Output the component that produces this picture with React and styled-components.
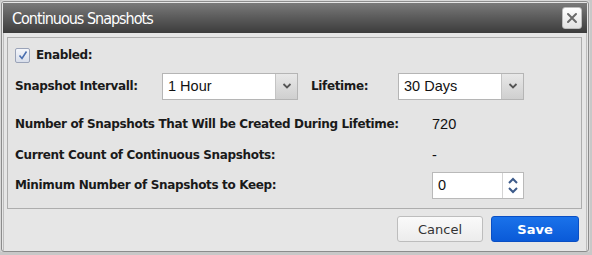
import styled, { createGlobalStyle } from "styled-components";

const Global = createGlobalStyle`
  html, body { margin: 0; padding: 0; background: #c8c8c8; }
  body { font-family: "DejaVu Sans", Verdana, sans-serif; }
`;

export default function App() {
  return (
    <>
      <Global />
      <Dialog>
        <Header>
          <Title>Continuous Snapshots</Title>
          <CloseButton>
            <svg width="12" height="12" viewBox="0 0 12 12">
              <path d="M2 2 L10 10 M10 2 L2 10" stroke="#6a6a6a" strokeWidth="2" strokeLinecap="round" />
            </svg>
          </CloseButton>
        </Header>
        <Body>
          <Panel>
            <Row gap={2}>
              <Check>
                <svg width="10" height="10" viewBox="0 0 10 10">
                  <path d="M1.5 5.5 L4 8.5 L8.5 1.5" stroke="#4a6fb0" strokeWidth="1.6" fill="none" />
                </svg>
              </Check>
              <Label>Enabled:</Label>
            </Row>
            <Row gap={1}>
              <Label width={147}>Snapshot Intervall:</Label>
              <Select width={136}>
                <SelectText>1 Hour</SelectText>
                <Arrow />
              </Select>
              <Label width={87} style={{ marginLeft: 13 }}>Lifetime:</Label>
              <Select width={126}>
                <SelectText>30 Days</SelectText>
                <Arrow />
              </Select>
            </Row>
            <Row gap={8}>
              <Label width={417}>Number of Snapshots That Will be Created During Lifetime:</Label>
              <Value>720</Value>
            </Row>
            <Row gap={1}>
              <Label width={417}>Current Count of Continuous Snapshots:</Label>
              <Value>-</Value>
            </Row>
            <Row>
              <Label width={417}>Minimum Number of Snapshots to Keep:</Label>
              <Spinner>
                <SpinText>0</SpinText>
                <SpinButtons>
                  <svg width="12" height="8" viewBox="0 0 12 8">
                    <path d="M2 6 L6 2 L10 6" stroke="#3c5a8a" strokeWidth="2" fill="none" />
                  </svg>
                  <svg width="12" height="8" viewBox="0 0 12 8">
                    <path d="M2 2 L6 6 L10 2" stroke="#3c5a8a" strokeWidth="2" fill="none" />
                  </svg>
                </SpinButtons>
              </Spinner>
            </Row>
          </Panel>
          <Footer>
            <Button>Cancel</Button>
            <Button primary>Save</Button>
          </Footer>
        </Body>
      </Dialog>
    </>
  );
}

function Arrow() {
  return (
    <ArrowBox>
      <svg width="10" height="6" viewBox="0 0 10 6">
        <path d="M1.5 1 L5 4.5 L8.5 1" stroke="#555" strokeWidth="1.8" fill="none" />
      </svg>
    </ArrowBox>
  );
}

const Dialog = styled.div`
  width: 588px;
  height: 251px;
  margin: 1px 0 0 1px;
  border: 1px solid #8c8c8c;
  border-radius: 3px;
  background: #e6e6e6;
  display: flex;
  flex-direction: column;
  box-sizing: border-box;
  overflow: hidden;
  box-shadow: 0 0 0 1px #d8d8d8;
`;

const Header = styled.div`
  height: 30px;
  margin: 1px 1px 0;
  background: linear-gradient(#7a7a7a, #5a5a5a 50%, #3c3c3c);
  display: flex;
  align-items: center;
  justify-content: space-between;
  padding: 0 5px 0 9px;
`;

const Title = styled.div`
  color: #fff;
  font-family: "DejaVu Sans Condensed", "DejaVu Sans", sans-serif;
  font-size: 16px;
  letter-spacing: -1px;
`;

const CloseButton = styled.div`
  width: 18px;
  height: 20px;
  border-radius: 3px;
  background: linear-gradient(#ffffff, #e2e2e2);
  border: 1px solid #bcbcbc;
  display: flex;
  align-items: center;
  justify-content: center;
`;

const Body = styled.div`
  flex: 1;
  display: flex;
  flex-direction: column;
  padding: 4px 4px 0 3px;
  border-left: 1px solid #bdbdbd;
  border-right: 1px solid #bdbdbd;
  margin: 0 1px;
`;

const Panel = styled.div`
  border: 1px solid #adadad;
  background: #e4e4e4;
  padding: 0 0 8px 7px;
  display: flex;
  flex-direction: column;
`;

const Row = styled.div`
  height: 30px;
  margin-top: ${p => p.gap || 0}px;
  display: flex;
  align-items: center;
`;

const Label = styled.div`
  width: ${p => (p.width ? `${p.width}px` : "auto")};
  font-weight: bold;
  font-size: 12px;
  letter-spacing: -0.35px;
  color: #1a1a1a;
  white-space: nowrap;
`;

const Check = styled.div`
  width: 13px;
  height: 13px;
  margin-right: 6px;
  border: 1px solid #9aa3b8;
  border-radius: 2px;
  background: linear-gradient(#f4f6fb, #d8deea);
  display: flex;
  align-items: center;
  justify-content: center;
`;

const Select = styled.div`
  width: ${p => p.width}px;
  height: 27px;
  box-sizing: border-box;
  border: 1px solid #b5b5b5;
  background: #fff;
  display: flex;
  align-items: stretch;
`;

const SelectText = styled.div`
  flex: 1;
  display: flex;
  align-items: center;
  padding-left: 5px;
  font-size: 14.5px;
  color: #111;
  font-family: "Liberation Sans", Arial, sans-serif;
`;

const ArrowBox = styled.div`
  width: 21px;
  border-left: 1px solid #c4c4c4;
  background: linear-gradient(#e8e8e8, #cfcfcf);
  display: flex;
  align-items: center;
  justify-content: center;
`;

const Value = styled.div`
  font-size: 14.5px;
  color: #111;
  font-family: "Liberation Sans", Arial, sans-serif;
`;

const Spinner = styled.div`
  width: 92px;
  height: 27px;
  box-sizing: border-box;
  border: 1px solid #b9b9b9;
  background: #fff;
  display: flex;
`;

const SpinText = styled.div`
  flex: 1;
  display: flex;
  align-items: center;
  padding-left: 5px;
  font-size: 14.5px;
  color: #111;
  font-family: "Liberation Sans", Arial, sans-serif;
`;

const SpinButtons = styled.div`
  width: 20px;
  border-left: 1px solid #d4d4d4;
  display: flex;
  flex-direction: column;
  align-items: center;
  justify-content: center;
  gap: 1px;
`;

const Footer = styled.div`
  flex: 1;
  display: flex;
  justify-content: flex-end;
  align-items: flex-start;
  gap: 8px;
  padding: 7px 3px 0 0;
`;

const Button = styled.div`
  width: ${p => (p.primary ? 88 : 86)}px;
  height: 26px;
  box-sizing: border-box;
  border-radius: 3px;
  display: flex;
  align-items: center;
  justify-content: center;
  font-size: 13px;
  font-family: "DejaVu Sans", Verdana, sans-serif;
  font-weight: ${p => (p.primary ? "bold" : "normal")};
  color: ${p => (p.primary ? "#fff" : "#333")};
  border: 1px solid ${p => (p.primary ? "#0a4fc4" : "#bdbdbd")};
  background: ${p => (p.primary ? "linear-gradient(#1a72ea, #0a5ad8)" : "linear-gradient(#fafafa, #ececec)")};
`;
